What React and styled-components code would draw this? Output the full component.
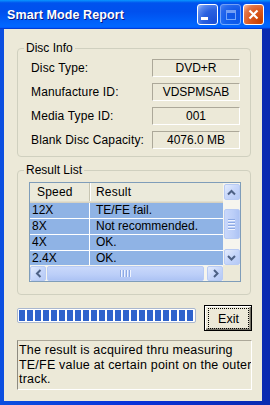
import React from 'react';
import styled, { createGlobalStyle } from 'styled-components';

const Global = createGlobalStyle`
  html, body { margin: 0; padding: 0; background: #ffffff; }
  body { font-family: "Liberation Sans", Arial, sans-serif; }
  * { box-sizing: border-box; }
`;

const FONT = `"Liberation Sans", Arial, sans-serif`;

const Window = styled.div`
  width: 270px;
  height: 405px;
  display: flex;
  flex-direction: column;
  background: linear-gradient(to right, #0B4FE0 0%, #0831D9 50%, #0A2AB0 100%);
  overflow: hidden;
`;

const TitleBar = styled.div`
  height: 29px;
  flex: none;
  display: flex;
  align-items: center;
  justify-content: space-between;
  padding: 0 6px 0 7px;
  background: linear-gradient(180deg, #0997ff, #0053ee 10%, #0050ee 40%, #0066ff 88%, #0066ff 93%, #005bff 95%, #003dd7 96%, #003dd7);
`;

const Title = styled.div`
  color: #fff;
  font: bold 12.5px ${FONT};
  text-shadow: 1px 1px #0a1883;
  letter-spacing: 0.1px;
`;

const Controls = styled.div`
  display: flex;
  gap: 2px;
`;

const CtrlBtn = styled.div`
  width: 21px;
  height: 21px;
  border: 1px solid #fff;
  border-radius: 3px;
  display: flex;
  align-items: center;
  justify-content: center;
  background: ${p => p.$close
    ? 'radial-gradient(circle at 85% 85%, #C84000 0%, #DC5A22 50%, #E0774A 75%, #FFC3A8 100%)'
    : 'radial-gradient(circle at 85% 85%, #1B4FD6 0%, #2B62E0 50%, #5A88EE 78%, #A9C2F6 100%)'};
  opacity: ${p => (p.$disabled ? 0.45 : 1)};
`;

const MinGlyph = styled.span`
  width: 7px;
  height: 3px;
  background: #fff;
  align-self: flex-end;
  margin: 0 6px 4px 0;
`;

const MaxGlyph = styled.span`
  width: 10px;
  height: 10px;
  border: 1px solid #fff;
  border-top-width: 3px;
`;

const Body = styled.div`
  flex: 1;
  background: #ECE9D8;
  margin: 0 8px 4px 4px;
  padding: 12px 10px 0 13px;
  display: flex;
  flex-direction: column;
`;

const Group = styled.fieldset`
  margin: ${p => p.$mt || 0}px 1px 0 0;
  padding: 0;
  border: 1px solid #D0D0BF;
  border-radius: 4px;
  min-width: 0;
`;

const Legend = styled.legend`
  margin-left: 6px;
  padding: 0 2px;
  font: 12px/14px ${FONT};
  color: #000;
`;

const InfoGrid = styled.div`
  display: grid;
  grid-template-columns: 1fr 88px;
  grid-auto-rows: 18px;
  row-gap: 6px;
  align-items: center;
  padding: 4px 10px 7px 13px;
`;

const Label = styled.div`
  font: 12px/14px ${FONT};
  color: #000;
  letter-spacing: 0.15px;
`;

const ValueBox = styled.div`
  height: 18px;
  border: 1px solid;
  border-color: #ACA899 #FFFFFF #FFFFFF #ACA899;
  display: flex;
  align-items: center;
  justify-content: center;
  font: 12px/14px ${FONT};
  color: #000;
`;

const ResultInner = styled.div`
  padding: 5px 9px 12px 11px;
`;

const ListBox = styled.div`
  width: 212px;
  height: 100px;
  border: 1px solid #7F9DB9;
  background: #fff;
  display: grid;
  grid-template-columns: 1fr 17px;
  grid-template-rows: 1fr 16px;
`;

const ListContent = styled.div`
  overflow: hidden;
  display: flex;
  flex-direction: column;
`;

const HeaderRow = styled.div`
  flex: none;
  height: 20px;
  display: grid;
  grid-template-columns: 60px 1fr;
  background: #EBEADB;
  box-shadow: inset 0 -1px #D6D2C2, inset 0 -2px #E2DECD;
`;

const HeaderCell = styled.div`
  font: 12px/18px ${FONT};
  color: #000;
  padding-left: ${p => p.$pl}px;
  border-right: ${p => (p.$sep ? '1px solid #C7C5B2' : 'none')};
  box-shadow: ${p => (p.$sep ? '1px 0 #fff' : 'none')};
  margin: ${p => (p.$sep ? '0 0 3px 0' : '0')};
  letter-spacing: 0.2px;
`;

const Row = styled.div`
  flex: none;
  height: 16px;
  display: grid;
  grid-template-columns: 60px 1fr;
  background: #8FB3E5;
  border-bottom: 1px solid #fff;
`;

const Cell = styled.div`
  font: 12px/15px ${FONT};
  color: #000;
  padding-left: ${p => p.$pl}px;
  border-right: ${p => (p.$sep ? '1px solid #fff' : 'none')};
  white-space: nowrap;
`;

const VScroll = styled.div`
  background: #F6F5EE;
  display: flex;
  flex-direction: column;
  align-items: center;
`;

const HScroll = styled.div`
  background: #F6F5EE;
  display: flex;
  align-items: center;
`;

const Corner = styled.div`
  background: #ECE9D8;
`;

const ScrollBtn = styled.div`
  width: ${p => p.$w}px;
  height: ${p => p.$h}px;
  flex: none;
  border: 1px solid #B8CBF4;
  border-radius: 2px;
  background: linear-gradient(135deg, #E4ECFD 0%, #C6D6FA 50%, #B5C9F5 100%);
  display: flex;
  align-items: center;
  justify-content: center;
  margin: ${p => p.$m || '0'};
`;

const Thumb = styled.div`
  flex: none;
  width: ${p => p.$w}px;
  height: ${p => p.$h}px;
  margin: ${p => p.$m};
  border: 1px solid #B8CBF4;
  border-radius: 2px;
  background: ${p => (p.$vertical
    ? 'linear-gradient(to right, #C9D8FB 0%, #BBCEF8 60%, #ADC3F4 100%)'
    : 'linear-gradient(to bottom, #C9D8FB 0%, #BBCEF8 60%, #ADC3F4 100%)')};
  display: flex;
  flex-direction: ${p => (p.$vertical ? 'column' : 'row')};
  align-items: center;
  justify-content: center;
  gap: 1px;
`;

const Grip = styled.span`
  width: ${p => (p.$vertical ? '7px' : '1px')};
  height: ${p => (p.$vertical ? '1px' : '7px')};
  background: #8CA9E4;
  box-shadow: ${p => (p.$vertical ? '0 1px #EEF3FE' : '1px 0 #EEF3FE')};
  margin: ${p => (p.$vertical ? '0 0 1px 0' : '0 1px 0 0')};
`;

const BottomRow = styled.div`
  display: flex;
  justify-content: space-between;
  align-items: flex-start;
  margin-top: 10px;
`;

const Progress = styled.div`
  width: 179px;
  height: 15px;
  margin-top: 3px;
  border: 1px solid #A9B7CF;
  border-radius: 2px;
  background: #fff;
  display: flex;
  align-items: center;
  gap: 2px;
  padding: 0 1px;
`;

const Block = styled.span`
  width: 6px;
  height: 11px;
  flex: none;
  background: #2F63CC;
`;

const ExitButton = styled.div`
  width: 48px;
  height: 26px;
  border: 1px solid #000;
  background: #ECE9D8;
  box-shadow: inset 1px 1px #fff, inset -1px -1px #716F64, inset -2px -2px #ACA899;
  display: flex;
  padding: 2px 2px 1px 3px;
`;

const FocusRing = styled.span`
  flex: 1;
  border: 1px dotted #000;
  display: flex;
  align-items: center;
  justify-content: center;
  font: 12.5px/14px ${FONT};
  color: #000;
`;

const InfoText = styled.div`
  margin-top: 9px;
  height: 50px;
  border: 1px solid;
  border-color: #ACA899 #FFFFFF #FFFFFF #8D8B80;
  padding: 2px 0 0 1px;
  font: 12.5px/14.5px ${FONT};
  letter-spacing: 0.2px;
  white-space: nowrap;
  overflow: hidden;
  color: #000;
`;

const Chevron = ({ dir }) => {
  const paths = {
    up: 'M1 5.5 L4.5 2 L8 5.5',
    down: 'M1 2 L4.5 5.5 L8 2',
    left: 'M5.5 1 L2 4.5 L5.5 8',
    right: 'M2 1 L5.5 4.5 L2 8',
  };
  const vert = dir === 'up' || dir === 'down';
  return (
    <svg width={vert ? 9 : 7} height={vert ? 7 : 9} viewBox={vert ? '0 0 9 7' : '0 0 7 9'}>
      <path d={paths[dir]} stroke="#4D6185" strokeWidth="2" fill="none" />
    </svg>
  );
};

const rows = [
  ['12X', 'TE/FE fail.'],
  ['8X', 'Not recommended.'],
  ['4X', 'OK.'],
  ['2.4X', 'OK.'],
];

const info = [
  ['Disc Type:', 'DVD+R'],
  ['Manufacture ID:', 'VDSPMSAB'],
  ['Media Type ID:', '001'],
  ['Blank Disc Capacity:', '4076.0 MB'],
];

export default function App() {
  return (
    <>
      <Global />
      <Window>
        <TitleBar>
          <Title>Smart Mode Report</Title>
          <Controls>
            <CtrlBtn><MinGlyph /></CtrlBtn>
            <CtrlBtn $disabled><MaxGlyph /></CtrlBtn>
            <CtrlBtn $close>
              <svg width="11" height="11" viewBox="0 0 11 11">
                <path d="M1.5 1.5 L9.5 9.5 M9.5 1.5 L1.5 9.5" stroke="#fff" strokeWidth="2.2" />
              </svg>
            </CtrlBtn>
          </Controls>
        </TitleBar>
        <Body>
          <Group>
            <Legend>Disc Info</Legend>
            <InfoGrid>
              {info.map(([l, v]) => (
                <React.Fragment key={l}>
                  <Label>{l}</Label>
                  <ValueBox>{v}</ValueBox>
                </React.Fragment>
              ))}
            </InfoGrid>
          </Group>
          <Group $mt={6}>
            <Legend>Result List</Legend>
            <ResultInner>
              <ListBox>
                <ListContent>
                  <HeaderRow>
                    <HeaderCell $pl={7} $sep>Speed</HeaderCell>
                    <HeaderCell $pl={6}>Result</HeaderCell>
                  </HeaderRow>
                  {rows.map(([s, r]) => (
                    <Row key={s}>
                      <Cell $pl={2} $sep>{s}</Cell>
                      <Cell $pl={6}>{r}</Cell>
                    </Row>
                  ))}
                </ListContent>
                <VScroll>
                  <ScrollBtn $w={16} $h={16} $m="1px 0 0 0"><Chevron dir="up" /></ScrollBtn>
                  <Thumb $vertical $w={16} $h={30} $m="9px 0 0 0">
                    <Grip $vertical /><Grip $vertical /><Grip $vertical /><Grip $vertical />
                  </Thumb>
                  <ScrollBtn $w={16} $h={16} $m="auto 0 0 0"><Chevron dir="down" /></ScrollBtn>
                </VScroll>
                <HScroll>
                  <ScrollBtn $w={16} $h={15}><Chevron dir="left" /></ScrollBtn>
                  <Thumb $w={157} $h={15} $m="0 0 0 1px">
                    <Grip /><Grip /><Grip /><Grip />
                  </Thumb>
                  <ScrollBtn $w={16} $h={15} $m="0 0 0 auto"><Chevron dir="right" /></ScrollBtn>
                </HScroll>
                <Corner />
              </ListBox>
            </ResultInner>
          </Group>
          <BottomRow>
            <Progress>
              {Array.from({ length: 22 }, (_, i) => <Block key={i} />)}
            </Progress>
            <ExitButton><FocusRing>Exit</FocusRing></ExitButton>
          </BottomRow>
          <InfoText>
            The result is acquired thru measuring<br />
            TE/FE value at certain point on the outer<br />
            track.
          </InfoText>
        </Body>
      </Window>
    </>
  );
}
